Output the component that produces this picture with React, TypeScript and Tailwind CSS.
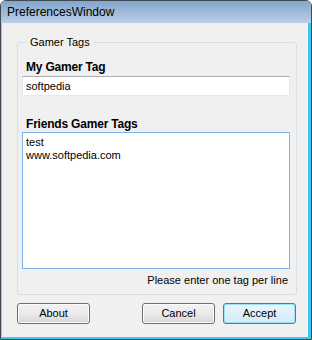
import { useState } from "react"

const font = { fontFamily: '"Liberation Sans", Arial, sans-serif' }

function WinButton({ label, primary }: { label: string; primary?: boolean }) {
    return (
        <button
            className={
                primary
                    ? "h-[21px] w-[73px] rounded-[3px] border border-[#3c7fb1] bg-gradient-to-b from-[#eaf6fd] to-[#d1eaf8] text-[11px] text-black shadow-[inset_0_0_0_1px_#9fe1f7]"
                    : "h-[21px] w-[73px] rounded-[3px] border border-[#707070] bg-gradient-to-b from-[#f2f2f2] via-[#ebebeb] to-[#d6d6d6] text-[11px] text-black shadow-[inset_0_0_0_1px_#fcfcfc]"
            }
        >
            {label}
        </button>
    )
}

export default function App() {
    const [tag, setTag] = useState("softpedia")
    const [friends, setFriends] = useState("test\nwww.softpedia.com")

    return (
        <div
            className="flex h-[340px] w-[312px] flex-col overflow-hidden rounded-t-[6px] border border-[#404a55] bg-[#f0f0f0] text-black"
            style={font}
        >
            {/* title bar */}
            <div className="flex h-[22px] shrink-0 items-center bg-gradient-to-b from-[#84a6ca] to-[#b8cfe7] pl-[6px] text-[12px]">
                PreferencesWindow
            </div>

            <div className="flex flex-1 flex-col border-r-[3px] border-b-[2px] border-l border-[#9fc4e4] border-r-[#3cc7ee] border-b-[#3cc7ee]">
                <div className="flex flex-1 flex-col pt-[12px] pr-[11px] pl-[15px]">
                    <fieldset className="flex h-[260px] flex-col rounded-[3px] border border-[#d5dfe5] pr-[6px] pl-[4px]">
                        <legend className="ml-[5px] px-[3px] text-[11px] leading-[14px]">Gamer Tags</legend>

                        <label className="mt-[10px] pl-[4px] text-[12px] leading-[16px] font-bold tracking-[-0.2px]">
                            My Gamer Tag
                        </label>
                        <input
                            value={tag}
                            onChange={(e) => setTag(e.target.value)}
                            className="mt-[1px] h-[20px] w-full border border-[#e3e9ef] border-t-[#abadb3] bg-white px-[3px] text-[11px] outline-none"
                        />

                        <label className="mt-[20px] pl-[4px] text-[12px] leading-[16px] font-bold tracking-[-0.2px]">
                            Friends Gamer Tags
                        </label>
                        <textarea
                            value={friends}
                            onChange={(e) => setFriends(e.target.value)}
                            className="h-[137px] w-full resize-none border border-[#7eb4ea] bg-white px-[3px] pt-[3px] text-[11px] leading-[13px] outline-none"
                        />

                        <p className="mt-[4px] pr-[2px] text-right text-[11px] leading-[14px]">
                            Please enter one tag per line
                        </p>
                    </fieldset>
                </div>

                <div className="flex items-center pr-[12px] pb-[13px] pl-[15px]">
                    <WinButton label="About" />
                    <div className="flex-1" />
                    <div className="flex gap-[8px]">
                        <WinButton label="Cancel" />
                        <WinButton label="Accept" primary />
                    </div>
                </div>
            </div>
        </div>
    )
}
